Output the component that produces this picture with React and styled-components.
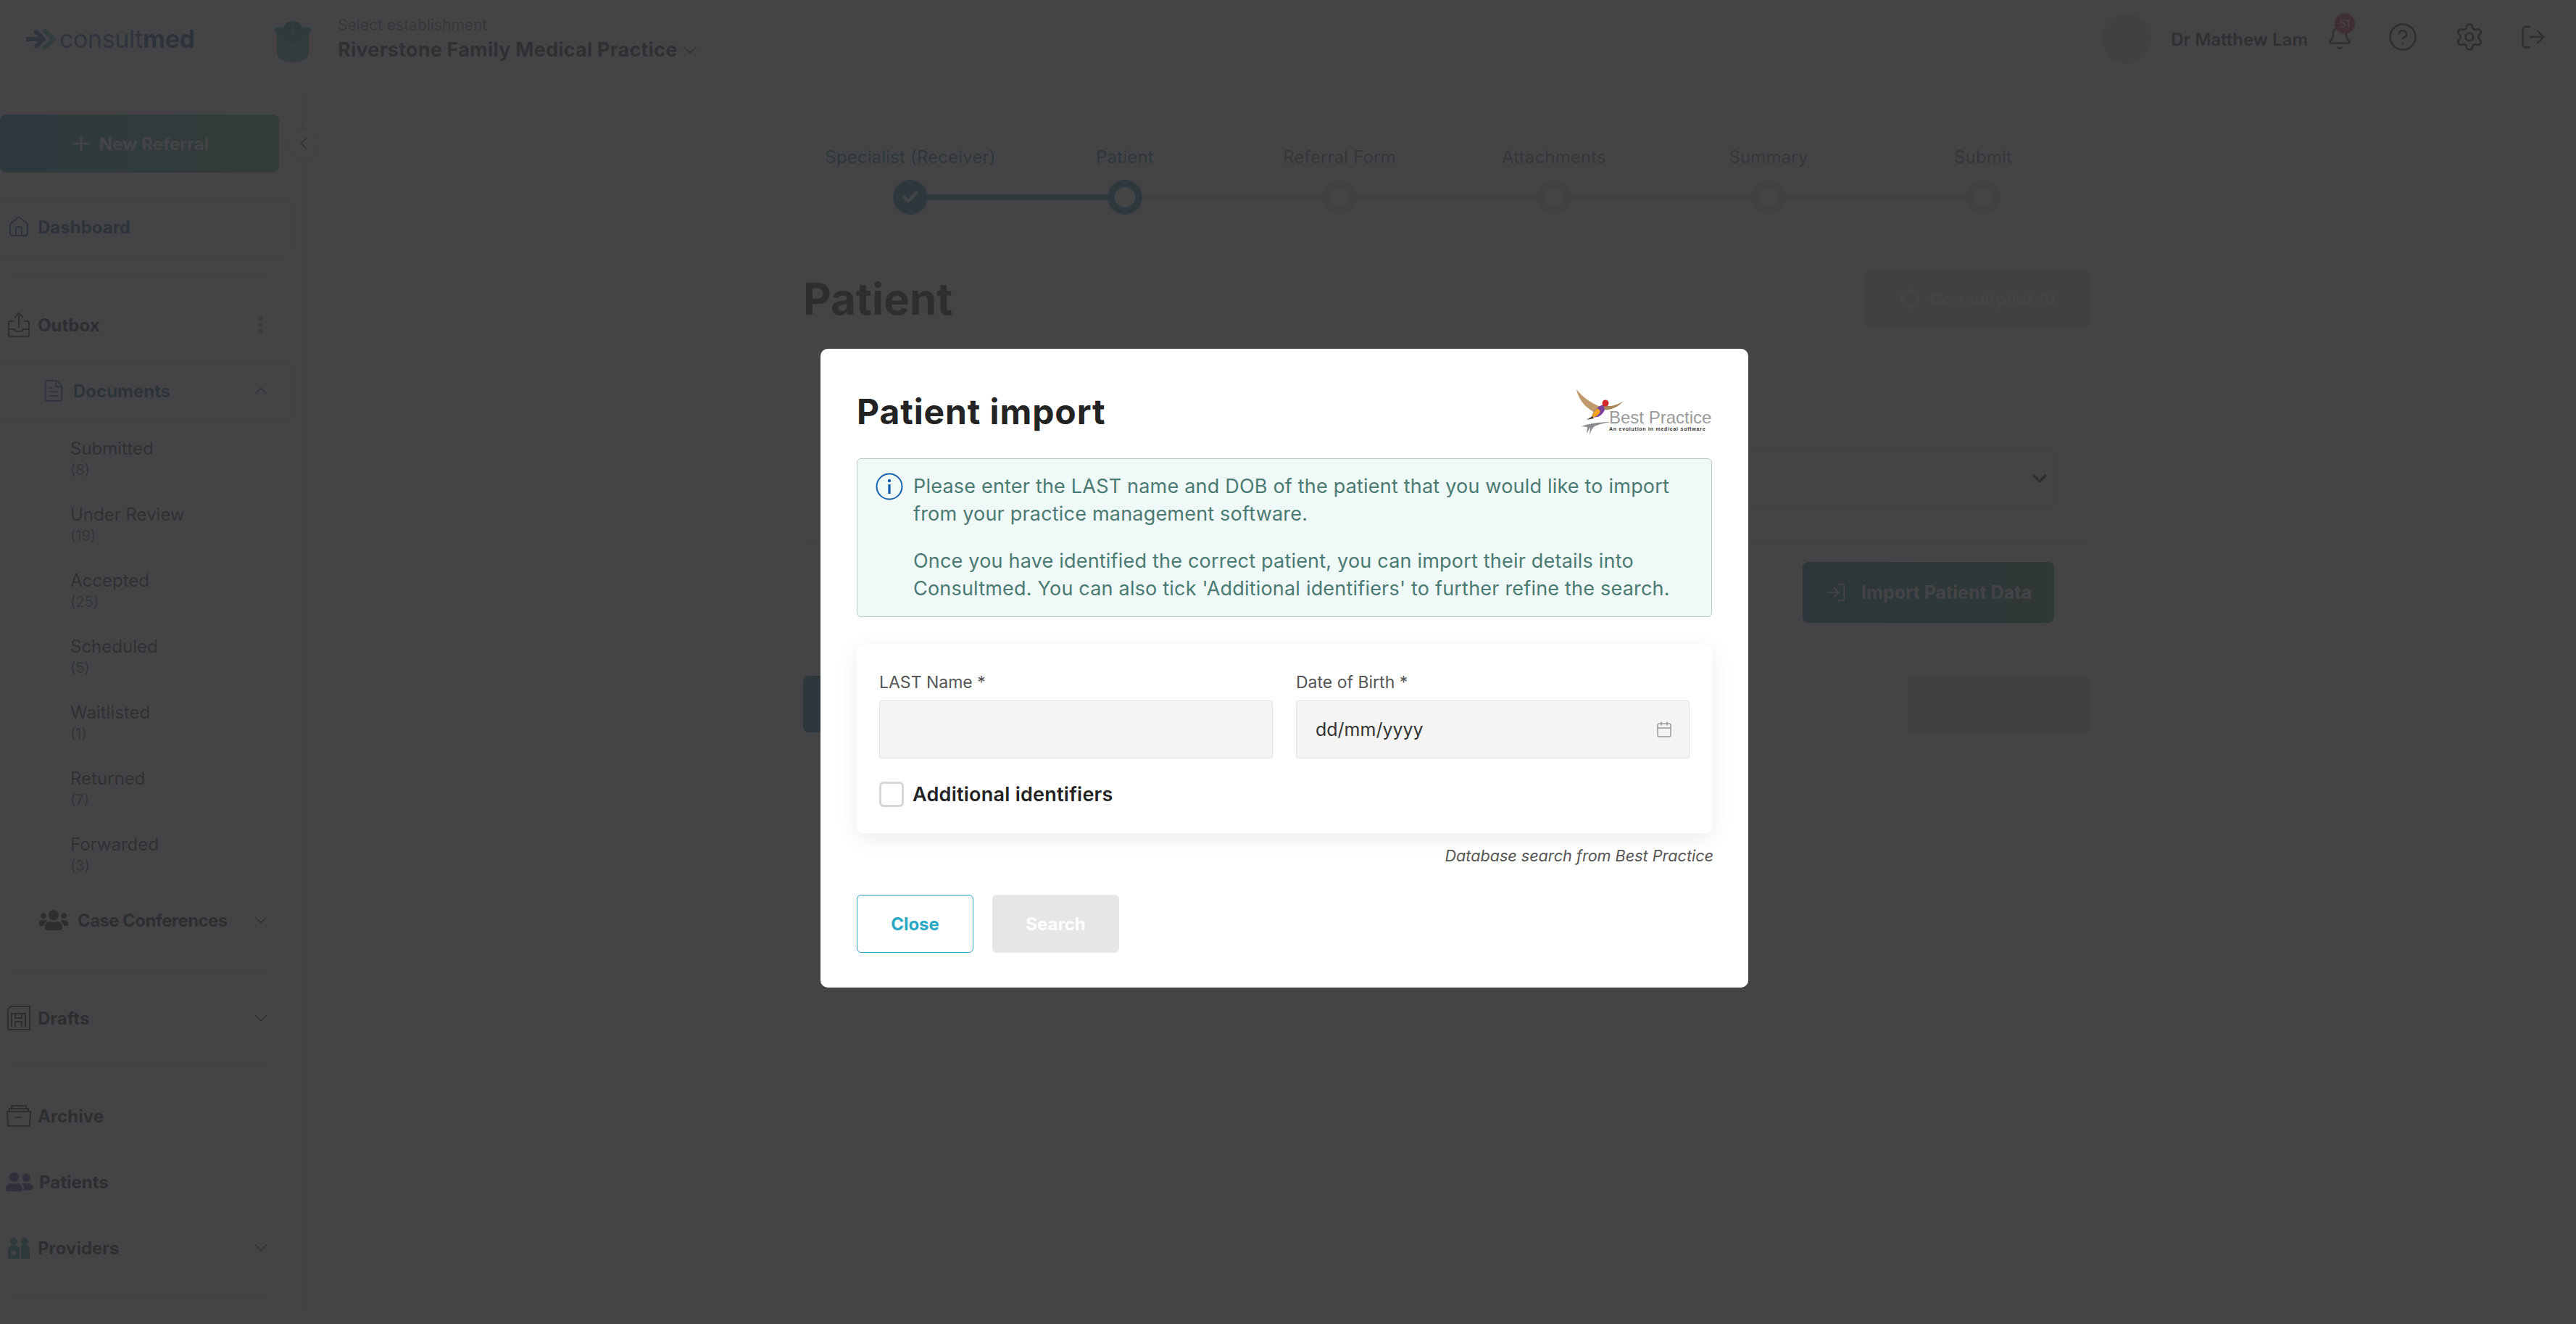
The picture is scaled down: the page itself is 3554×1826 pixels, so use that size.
import styled, { createGlobalStyle } from "styled-components";
import {
	Bell,
	Calendar,
	Camera,
	Check,
	ChevronDown,
	ChevronLeft,
	ChevronRight,
	ChevronUp,
	CircleHelp,
	EllipsisVertical,
	FileText,
	Home,
	LogIn,
	LogOut,
	Plus,
	Settings,
} from "lucide-react";
import { FaUserFriends, FaUsers } from "react-icons/fa";

const GlobalStyle = createGlobalStyle`
	html, body {
		margin: 0;
		height: 100%;
		overflow: hidden;
		background: #fff;
		font-family: Inter, "Liberation Sans", sans-serif;
		color: #232323;
	}
	* { box-sizing: border-box; }
`;

const docStatuses = [
	["Submitted", 8],
	["Under Review", 19],
	["Accepted", 25],
	["Scheduled", 5],
	["Waitlisted", 1],
	["Returned", 7],
	["Forwarded", 3],
];

const steps = ["Specialist (Receiver)", "Patient", "Referral Form", "Attachments", "Summary", "Submit"];

const App = () => (
	<>
		<GlobalStyle />
		<Page>
			<Header>
				<LogoLink>
					<svg width="42" height="28" viewBox="0 0 42 28">
						<path d="M0 14h24" stroke="#1f5a9c" strokeWidth="6" strokeLinecap="round" />
						<path d="M14 4l10 10-10 10" fill="none" stroke="#1f5a9c" strokeWidth="6" strokeLinecap="round" strokeLinejoin="round" />
						<path d="M24 1l14 13-14 13" fill="none" stroke="#35b39a" strokeWidth="6" />
					</svg>
					<LogoText>
						consult<b>med</b>
					</LogoText>
				</LogoLink>
				<Establishment>
					<svg width="50" height="58" viewBox="0 0 50 58">
						<path d="M0 10h50v6l-3 2v26c0 8-10 14-22 14S3 52 3 44V18l-3-2z" fill="#2f9f94" />
						<circle cx="25" cy="15" r="14" fill="#2a8f8a" />
						<path d="M25 8v14M18 15h14" stroke="#6cc7bb" strokeWidth="2" />
						<rect x="14" y="34" width="22" height="24" fill="#58b8a6" />
					</svg>
					<EstablishmentText>
						<small>Select establishment</small>
						<strong>
							Riverstone Family Medical Practice <ChevronDown size={32} strokeWidth={1.25} />
						</strong>
					</EstablishmentText>
				</Establishment>
				<UserArea>
					<Avatar>
						<Camera size={40} strokeWidth={1} />
					</Avatar>
					<UserName>Dr Matthew Lam</UserName>
					<BellWrap>
						<Bell size={36} strokeWidth={1.6} />
						<Badge>51</Badge>
					</BellWrap>
					<HeaderIcon $left={48}>
						<CircleHelp size={42} strokeWidth={1.5} />
					</HeaderIcon>
					<HeaderIcon $left={50}>
						<Settings size={42} strokeWidth={1.5} />
					</HeaderIcon>
					<HeaderIcon $left={48}>
						<LogOut size={38} strokeWidth={1.5} />
					</HeaderIcon>
				</UserArea>
			</Header>

			<Body>
				<Sidebar>
					<CollapseToggle>
						<ChevronLeft size={28} strokeWidth={1.25} />
					</CollapseToggle>
					<NewReferral>
						<Plus size={30} strokeWidth={2} /> New Referral
					</NewReferral>

					<NavRow $boxed $first $color="#1c4f8f">
						<Home size={32} strokeWidth={1.5} />
						<NavLabel>Dashboard</NavLabel>
					</NavRow>
					<NavDivider />
					<NavRow $flush>
						<svg width="32" height="36" viewBox="0 0 32 36" fill="none" stroke="currentColor" strokeWidth="2">
							<path d="M16 22V2M10 8l6-6 6 6" />
							<path d="M9 13H4a2 2 0 0 0-2 2v17a2 2 0 0 0 2 2h24a2 2 0 0 0 2-2V15a2 2 0 0 0-2-2h-5" />
							<path d="M2 24h8l2 3h8l2-3h8" />
						</svg>
						<NavLabel>Outbox</NavLabel>
						<RowEnd $faint>
							<EllipsisVertical size={32} strokeWidth={3} />
						</RowEnd>
					</NavRow>
					<NavRow $boxed $indent={57} $color="#1c4f8f">
						<FileText size={34} strokeWidth={1.25} />
						<NavLabel>Documents</NavLabel>
						<RowEnd>
							<ChevronUp size={30} strokeWidth={1.25} />
						</RowEnd>
					</NavRow>
					<SubList>
						{docStatuses.map(([label, count]) => (
							<SubItem key={label}>
								<span>{label}</span>
								<em>({count})</em>
							</SubItem>
						))}
					</SubList>
					<NavRow $flush $indent={54} $gap={13}>
						<FaUsers size={40} />
						<NavLabel $tight>Case Conferences</NavLabel>
						<RowEnd>
							<ChevronDown size={30} strokeWidth={1.25} />
						</RowEnd>
					</NavRow>
					<NavDivider />
					<NavRow $flush>
						<svg width="32" height="34" viewBox="0 0 32 34" fill="none" stroke="currentColor" strokeWidth="2">
							<path d="M5 1h26v32H1V5z" />
							<path d="M6 29V11h19v18" />
							<path d="M11 11v6h9v-6M11 29v-7h9v7" />
						</svg>
						<NavLabel>Drafts</NavLabel>
						<RowEnd>
							<ChevronDown size={30} strokeWidth={1.25} />
						</RowEnd>
					</NavRow>
					<NavDivider />
					<NavRow $flush $indent={9} $gap={9}>
						<svg width="34" height="30" viewBox="0 0 34 30" fill="none" stroke="currentColor" strokeWidth="2">
							<path d="M1 9h32l-1 19a1 1 0 0 1-1 1H3a1 1 0 0 1-1-1z" />
							<path d="M4 9V5h26v4M7 5V1h20v4" />
							<path d="M12 17h10" />
						</svg>
						<NavLabel>Archive</NavLabel>
					</NavRow>
					<NavRow $color="#3f2d8f" $indent={8} $gap={8}>
						<FaUserFriends size={38} />
						<NavLabel $dark>Patients</NavLabel>
					</NavRow>
					<NavRow $color="#1f9a86">
						<svg width="32" height="30" viewBox="0 0 32 30" fill="currentColor">
							<circle cx="9" cy="6" r="5" />
							<circle cx="24" cy="6" r="5" />
							<path d="M1 30V18c0-4 4-7 8-7s8 3 8 7v12zM19 30V12c1-1 3-1 5-1 4 0 7 3 7 7v12z" />
							<path d="M9 18v8M5 22h8" stroke="#fff" strokeWidth="3" />
						</svg>
						<NavLabel $dark>Providers</NavLabel>
						<RowEnd $dark>
							<ChevronDown size={30} strokeWidth={1.25} />
						</RowEnd>
					</NavRow>
					<NavDivider />
				</Sidebar>

				<Main>
					<Stepper>
						{steps.map((label, i) => (
							<Step key={label} $done={i < 1} $last={i === steps.length - 1}>
								<StepLabel $lit={i < 2}>{label}</StepLabel>
								<StepDot $done={i < 1} $lit={i < 2}>
									{i < 1 && <Check size={26} strokeWidth={4} />}
								</StepDot>
							</Step>
						))}
					</Stepper>

					<TitleRow>
						<PageTitle>Patient</PageTitle>
						<PilotButton>
							<svg width="30" height="30" viewBox="0 0 30 30" fill="none" stroke="#fff" strokeWidth="5">
								<circle cx="15" cy="15" r="11" strokeDasharray="20 4" />
							</svg>
							Consultpilot AI
						</PilotButton>
					</TitleRow>

					<PatientCard>
						<FakeSelect>
							<ChevronDown size={30} strokeWidth={3} />
						</FakeSelect>
						<CardRule />
						<ImportButton>
							<LogIn size={30} strokeWidth={1.5} />
							Import Patient Data
						</ImportButton>
					</PatientCard>

					<FooterRow>
						<BackButton />
						<NextButton>
							Next Step <ChevronRight size={28} strokeWidth={1.25} />
						</NextButton>
					</FooterRow>
				</Main>
			</Body>

			<Overlay>
				<Modal>
					<ModalHeader>
						<ModalTitle>Patient import</ModalTitle>
						<svg width="190" height="66" viewBox="0 0 190 66">
							<path d="M3 2c3 16 15 28 31 35l7-9C27 23 12 14 3 2z" fill="#c09a6c" />
							<path d="M40 24c10 3 20-1 28-6-8 9-18 13-28 12z" fill="#a98658" />
							<path d="M24 40c2-9 9-15 16-17l2 7c-3 7-9 12-18 10z" fill="#7b3fa0" />
							<path d="M24 40c1-5 4-9 8-12l4 4c-2 5-6 9-12 8z" fill="#f2a31c" />
							<circle cx="43" cy="21" r="4.5" fill="#d3282a" />
							<path d="M17 44l8-5 2 3z" fill="#4a3a28" />
							<path d="M10 53c10-4 26-6 40-6-12 2-18 4-22 6-3 2-5 6-7 12l1-11-5 9 1-9z" fill="#8a8c90" />
							<text x="48" y="49" fontFamily="Liberation Sans, sans-serif" fontSize="24" fill="#9a9a9a">
								Best Practice
							</text>
							<text x="48" y="59" fontFamily="Liberation Sans, sans-serif" fontSize="7" fontWeight="700" letterSpacing="0.75" fill="#333">
								An evolution in medical software
							</text>
						</svg>
					</ModalHeader>

					<Notice>
						<NoticeIcon>
							<svg width="38" height="38" viewBox="0 0 38 38" fill="none">
								<circle cx="19" cy="19" r="17.5" stroke="#1761ae" strokeWidth="2" />
								<circle cx="19" cy="11" r="2.2" fill="#1761ae" />
								<path d="M19 16v13" stroke="#1761ae" strokeWidth="3.4" />
							</svg>
						</NoticeIcon>
						<NoticeBody>
							<p>Please enter the LAST name and DOB of the patient that you would like to import from your practice management software.</p>
							<p>Once you have identified the correct patient, you can import their details into Consultmed. You can also tick 'Additional identifiers' to further refine the search.</p>
						</NoticeBody>
					</Notice>

					<FormCard>
						<FieldGrid>
							<Field>
								<FieldLabel>LAST Name *</FieldLabel>
								<TextInput type="text" />
							</Field>
							<Field>
								<FieldLabel>Date of Birth *</FieldLabel>
								<DateInput>
									dd/mm/yyyy
									<Calendar size={24} strokeWidth={1.5} />
								</DateInput>
							</Field>
						</FieldGrid>
						<CheckRow>
							<CheckBox type="checkbox" />
							Additional identifiers
						</CheckRow>
					</FormCard>

					<SourceNote>Database search from Best Practice</SourceNote>

					<ModalActions>
						<CloseButton>Close</CloseButton>
						<SearchButton disabled>Search</SearchButton>
					</ModalActions>
				</Modal>
			</Overlay>
		</Page>
	</>
);

const Page = styled.div`
	position: relative;
	width: 3554px;
	height: 1826px;
	overflow: hidden;
`;

const Header = styled.header`
	height: 127px;
	display: flex;
	align-items: flex-start;
	padding: 0 40px 0 36px;
`;

const LogoLink = styled.div`
	display: flex;
	align-items: center;
	gap: 4px;
	width: 343px;
	height: 27px;
	margin-top: 40px;
`;

const LogoText = styled.span`
	font-size: 34px;
	color: #2a5d9c;
	letter-spacing: -0.4px;

	b {
		font-weight: 700;
		color: #1c4f8f;
	}
`;

const Establishment = styled.div`
	display: flex;
	gap: 37px;
	margin-top: 28px;
`;

const EstablishmentText = styled.div`
	display: flex;
	flex-direction: column;

	small {
		font-size: 21px;
		line-height: 22px;
		color: #7b7b7b;
		margin-top: -4px;
	}

	strong {
		display: flex;
		align-items: center;
		gap: 2px;
		margin-top: 7px;
		font-size: 27px;
		line-height: 32px;
		font-weight: 700;
		letter-spacing: 0.2px;
		color: #333;
	}
`;

const UserArea = styled.div`
	margin-left: auto;
	display: flex;
	align-items: center;
	height: 108px;
	color: #232323;
`;

const Avatar = styled.div`
	width: 68px;
	height: 68px;
	border-radius: 50%;
	background: #e2e2e2;
	color: #cfcfcf;
	display: flex;
	align-items: center;
	justify-content: center;
`;

const UserName = styled.span`
	margin-left: 27px;
	font-size: 24px;
	font-weight: 600;
	color: #333;
`;

const BellWrap = styled.div`
	position: relative;
	display: flex;
	margin-left: 26px;
	margin-top: -4px;
`;

const Badge = styled.span`
	position: absolute;
	top: -16px;
	left: 11px;
	width: 28px;
	height: 29px;
	border-radius: 50%;
	background: #d8343c;
	color: #fff;
	font-size: 15px;
	line-height: 29px;
	text-align: center;
`;

const HeaderIcon = styled.div`
	display: flex;
	margin-left: ${(p) => p.$left}px;
	margin-top: -6px;
`;

const Body = styled.div`
	display: flex;
	height: 1679px;
`;

const Sidebar = styled.aside`
	position: relative;
	width: 421px;
	flex-shrink: 0;
	padding-top: 31px;
	border-right: 6px solid #e3e3e3;
`;

const CollapseToggle = styled.div`
	position: absolute;
	top: 51px;
	right: -24px;
	width: 40px;
	height: 40px;
	border-radius: 50%;
	background: #fff;
	box-shadow: 0 1px 6px rgba(0, 0, 0, 0.2);
	display: flex;
	align-items: center;
	justify-content: center;
`;

const NewReferral = styled.div`
	width: 385px;
	height: 80px;
	border-radius: 8px;
	background: linear-gradient(90deg, #1d8ea6, #4eb07e);
	display: flex;
	align-items: center;
	justify-content: center;
	gap: 10px;
	color: #fff;
	font-size: 24px;
	font-weight: 700;
`;

const NavRow = styled.div`
	display: flex;
	align-items: center;
	gap: ${(p) => p.$gap ?? 10}px;
	width: 403px;
	height: 82px;
	padding: 0 27px 0 ${(p) => p.$indent ?? 10}px;
	margin-top: ${(p) => (p.$first ? 34 : p.$flush ? 0 : 9)}px;
	border: 1px solid ${(p) => (p.$boxed ? "#e2e2e2" : "transparent")};
	border-left: 0;
	border-radius: 0 8px 8px 0;
	color: ${(p) => p.$color ?? "#232323"};

	& + & {
		margin-top: 9px;
	}
`;

const NavLabel = styled.span`
	font-size: 24px;
	font-weight: 700;
	white-space: nowrap;
	letter-spacing: ${(p) => (p.$tight ? "-0.6px" : "0")};
	color: ${(p) => (p.$dark ? "#232323" : "inherit")};
`;

const RowEnd = styled.span`
	display: flex;
	margin-left: auto;
	color: ${(p) => (p.$faint ? "#9a9a9a" : p.$dark ? "#232323" : "inherit")};
`;

const NavDivider = styled.div`
	width: 358px;
	height: 1px;
	margin: 26px 0 26px 13px;
	background: #e2e2e2;
`;

const SubList = styled.div`
	margin: 20px 0 -9px;
`;

const SubItem = styled.div`
	height: 91px;
	padding: 6px 0 0 97px;
	display: flex;
	flex-direction: column;

	span {
		font-size: 24px;
		line-height: 26px;
		color: #333;
	}

	em {
		margin-top: 4px;
		font-size: 20px;
		line-height: 24px;
		font-style: normal;
		color: #3d6f6c;
	}
`;

const Main = styled.main`
	flex: 1;
	padding: 76px 0 0 687px;
`;

const Stepper = styled.div`
	display: grid;
	grid-template-columns: repeat(6, 296px);
`;

const Step = styled.div`
	position: relative;
	display: flex;
	flex-direction: column;
	align-items: center;

	&::after {
		content: "";
		display: ${(p) => (p.$last ? "none" : "block")};
		position: absolute;
		top: 65px;
		left: 50%;
		width: 100%;
		height: 8px;
		background: ${(p) => (p.$done ? "#12808c" : "#dcdcdc")};
	}
`;

const StepLabel = styled.span`
	font-size: 24px;
	line-height: 28px;
	letter-spacing: 0.15px;
	white-space: nowrap;
	color: ${(p) => (p.$lit ? "#1a7f80" : "#6f6f6f")};
`;

const StepDot = styled.span`
	position: relative;
	z-index: 1;
	width: 48px;
	height: 48px;
	margin-top: 17px;
	border-radius: 50%;
	border: 10px solid ${(p) => (p.$lit ? "#12808c" : "#dcdcdc")};
	background: ${(p) => (p.$done ? "#12808c" : "#fff")};
	color: #fff;
	display: flex;
	align-items: center;
	justify-content: center;

	svg {
		flex-shrink: 0;
	}
`;

const TitleRow = styled.div`
	display: flex;
	align-items: center;
	justify-content: space-between;
	width: 1776px;
	height: 80px;
	margin-top: 76px;
`;

const PageTitle = styled.h1`
	margin: 0;
	font-size: 60px;
	font-weight: 700;
	color: #232323;
`;

const PilotButton = styled.div`
	width: 312px;
	height: 80px;
	border-radius: 8px;
	background: #dcdcdc;
	color: #fff;
	font-size: 24px;
	font-weight: 700;
	display: flex;
	align-items: center;
	justify-content: center;
	gap: 12px;
`;

const PatientCard = styled.section`
	width: 1776px;
	height: 375px;
	margin-top: 56px;
	padding: 112px 49px 0;
	border: 1px solid #ededed;
	border-radius: 10px;
	box-shadow: 0 4px 20px rgba(0, 0, 0, 0.04);
`;

const FakeSelect = styled.div`
	height: 78px;
	border: 1px solid #e2e2e2;
	border-radius: 4px;
	display: flex;
	align-items: center;
	justify-content: flex-end;
	padding: 0 4px;
`;

const CardRule = styled.div`
	height: 1px;
	margin: 49px -49px 0;
	background: #e2e2e2;
`;

const ImportButton = styled.div`
	width: 347px;
	height: 84px;
	margin: 26px 0 0 auto;
	border-radius: 8px;
	background: linear-gradient(90deg, #14778a, #2f8a66);
	color: #fff;
	font-size: 25px;
	font-weight: 700;
	display: flex;
	align-items: center;
	justify-content: center;
	gap: 20px;
`;

const FooterRow = styled.div`
	display: flex;
	justify-content: space-between;
	width: 1776px;
	margin-top: 49px;
`;

const BackButton = styled.div`
	width: 250px;
	height: 78px;
	border-radius: 8px;
	background: #14778a;
`;

const NextButton = styled.div`
	width: 252px;
	height: 80px;
	border-radius: 8px;
	background: #dcdcdc;
	color: #c8c8c8;
	font-size: 25px;
	font-weight: 700;
	display: flex;
	align-items: center;
	justify-content: center;
	gap: 20px;
`;

const Overlay = styled.div`
	position: absolute;
	inset: 0;
	z-index: 10;
	padding: 481px 0 0 1132px;
	background: rgba(48, 48, 50, 0.9);
`;

const Modal = styled.div`
	width: 1280px;
	height: 881px;
	padding: 50px 50px 0;
	background: #fff;
	border-radius: 10px;
`;

const ModalHeader = styled.div`
	height: 101px;
	display: flex;
	justify-content: space-between;
	padding-top: 4px;
`;

const ModalTitle = styled.h2`
	margin: 0;
	font-size: 48px;
	line-height: 66px;
	letter-spacing: 0.9px;
	font-weight: 700;
	color: #232323;
`;

const Notice = styled.div`
	display: flex;
	gap: 14px;
	height: 219px;
	padding: 19px 20px 0 25px;
	background: #eff9f7;
	border: 1px solid #bccbc7;
	border-radius: 6px;
	color: #4a7a72;
`;

const NoticeIcon = styled.span`
	display: flex;
	flex-shrink: 0;
	height: 38px;
`;

const NoticeBody = styled.div`
	font-size: 27px;
	line-height: 38px;
	letter-spacing: 0.2px;

	p {
		margin: 0 0 27px;
	}
`;

const FormCard = styled.div`
	height: 260px;
	margin-top: 38px;
	padding: 37px 31px 0;
	border-radius: 10px;
	background: #fff;
	box-shadow: 0 8px 30px rgba(0, 0, 0, 0.08);
`;

const FieldGrid = styled.div`
	display: grid;
	grid-template-columns: 1fr 1fr;
	gap: 32px;
`;

const Field = styled.div`
	display: flex;
	flex-direction: column;
	gap: 10px;
`;

const FieldLabel = styled.label`
	font-size: 23px;
	line-height: 30px;
	color: #555;
`;

const TextInput = styled.input`
	height: 80px;
	padding: 0 26px;
	background: #f4f4f4;
	border: 1px solid #e3e3e3;
	border-radius: 3px;
	outline: none;
`;

const DateInput = styled.div`
	height: 80px;
	padding: 0 26px;
	background: #f4f4f4;
	border: 1px solid #e3e3e3;
	border-radius: 3px;
	display: flex;
	align-items: center;
	justify-content: space-between;
	font-size: 25px;
	color: #333;

	svg {
		color: #999;
		margin-right: -4px;
	}
`;

const CheckRow = styled.label`
	display: flex;
	align-items: center;
	gap: 12px;
	margin-top: 32px;
	font-size: 27px;
	font-weight: 600;
	letter-spacing: 0.25px;
	color: #232323;
`;

const CheckBox = styled.input`
	appearance: none;
	width: 34px;
	height: 35px;
	margin: 0;
	border: 3px solid #d6d6d6;
	border-radius: 6px;
	background: #fff;
`;

const SourceNote = styled.div`
	margin: 17px -2px 0 0;
	font-size: 21.6px;
	line-height: 28px;
	font-style: italic;
	text-align: right;
	color: #555;
`;

const ModalActions = styled.div`
	display: flex;
	gap: 26px;
	margin-top: 40px;
`;

const CloseButton = styled.button`
	width: 161px;
	height: 80px;
	background: #fff;
	border: 1.5px solid #2aa7c4;
	border-radius: 6px;
	color: #2aa7c4;
	font: 700 24px Inter, sans-serif;
`;

const SearchButton = styled.button`
	width: 175px;
	height: 80px;
	background: #e6e6e6;
	border: 0;
	border-radius: 6px;
	color: #fff;
	font: 700 24px Inter, sans-serif;
`;

export default App;
